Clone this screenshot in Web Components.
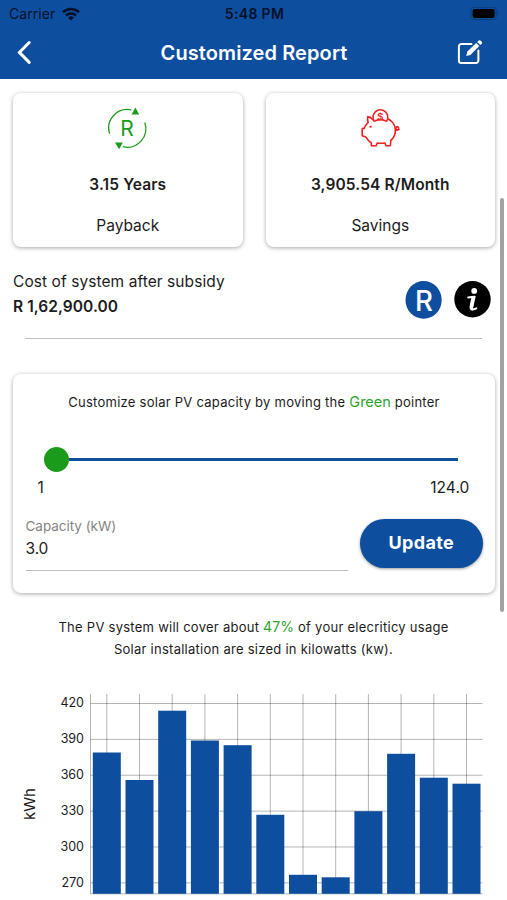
<!DOCTYPE html>
<html lang="en">
<head>
<meta charset="utf-8">
<title>Customized Report</title>
<style>
html,body{margin:0;height:100%;overflow:hidden;background:#fff}
body{font-family:Inter,"Liberation Sans",sans-serif;color:#1c1c1c}
</style>
</head>
<body>
<report-app></report-app>
<script>
const define = (name, html, setup) => customElements.define(name, class extends HTMLElement {
  connectedCallback() {
    if (this.shadowRoot) return;
    this.attachShadow({mode: 'open'}).innerHTML = html;
    if (setup) setup(this.shadowRoot, this);
  }
});

define('status-bar', `
<style>
:host{display:grid;grid-template-columns:1fr auto 1fr;align-items:center;height:27px;padding:0 7px 0 9px;font-size:14px;color:#06122b;box-sizing:border-box}
.l{display:flex;align-items:center;gap:7px;letter-spacing:.05px}
.c{font-weight:580;letter-spacing:.36px}
.r{display:flex;justify-content:flex-end}
svg{display:block}
</style>
<div class="l"><span>Carrier</span><svg width="18" height="14" viewBox="0 0 18 14"><g fill="none" stroke="#050f25" stroke-width="2.6"><path d="M1 5.2a11.6 11.6 0 0 1 16 0"/><path d="M4 8.5a7.3 7.3 0 0 1 10 0"/></g><path d="M9 13.6 6.1 10.7a4.2 4.2 0 0 1 5.8 0z" fill="#050f25"/></svg></div>
<div class="c">5:48 PM</div>
<div class="r"><svg width="30" height="14" viewBox="0 0 30 14"><rect x=".8" y=".3" width="25.4" height="12.2" rx="3.6" fill="none" stroke="#0b3c7d" stroke-width="1.1"/><rect x="2.6" y="2" width="22" height="9" rx="2" fill="#000"/><path d="M27.6 4.3a2.6 2.6 0 0 1 0 4.4z" fill="#0b3c7d"/></svg></div>`);

define('nav-bar', `
<style>
:host{display:grid;grid-template-columns:1fr auto 1fr;align-items:center;height:51px;padding:0 24px 0 16px;color:#fff;box-sizing:border-box}
h1{margin:0;font-size:20px;line-height:24px;font-weight:580;letter-spacing:.1px;padding-left:9px}
svg{display:block}.r{display:flex;justify-content:flex-end}
</style>
<svg width="18" height="26" viewBox="0 0 18 26"><path d="M13.2 2.5 3.4 12.4l9.8 10" fill="none" stroke="#fff" stroke-width="3" stroke-linecap="round" stroke-linejoin="miter"/></svg>
<h1>Customized Report</h1>
<div class="r"><svg width="26" height="26" viewBox="0 0 26 26"><g transform="translate(0 -.7)"><path d="M14.5 4.6H4.4a2.5 2.5 0 0 0-2.5 2.5v14.2a2.5 2.5 0 0 0 2.5 2.5h14.5a2.5 2.5 0 0 0 2.5-2.5V11.2" fill="none" stroke="#fff" stroke-width="2" stroke-linecap="round"/><path d="M9.2 16.7 10.4 12.2 19.2 3.6 22.3 6.7 13.4 15.6z" fill="#fff"/><path d="m20.2 2.6 1-1a2 2 0 0 1 2.8 0l.4.4a2 2 0 0 1 0 2.8l-1 1z" fill="#fff"/></g></svg></div>`);

define('ui-card', `
<style>
:host{display:block;box-sizing:border-box;background:#fff;border-radius:8px;box-shadow:0 1px 4px rgba(0,0,0,.34)}
</style><slot></slot>`);

define('stat-card', `
<style>
:host{display:block;flex:1}
ui-card{height:154px;display:flex;flex-direction:column;align-items:center;padding-top:14px;font-size:15.5px;line-height:20px}
.i{height:44px;margin-bottom:24px}
.v{font-weight:580;letter-spacing:.12px;margin-bottom:21px}
</style>
<ui-card><div class="i"><slot name="icon"></slot></div><div class="v"><slot name="value"></slot></div><div><slot></slot></div></ui-card>`);

define('payback-icon', `
<style>:host{display:block}svg{display:block}</style>
<svg width="44" height="44" viewBox="0 0 44 44"><g transform="translate(-.6 -.3)"><g fill="none" stroke="#1a9c1a" stroke-width="1.3"><path d="M4.2 27A18.6 18.6 0 0 1 26 3.2"/><path d="M39.4 15.8A18.6 18.6 0 0 1 17.5 40"/></g><path d="M30 .9 33.8 7.8H26.2zM13.7 42.5 9.6 35.7H17.4z" fill="#1a9c1a"/><text x="21.5" y="29" text-anchor="middle" font-family="Inter,sans-serif" font-size="21" fill="#1a9c1a">R</text></g></svg>`);

define('piggy-icon', `
<style>:host{display:block}svg{display:block}</style>
<svg width="44" height="44" viewBox="0 0 44 44"><g fill="none" stroke="#f0221f" stroke-width="1.6" stroke-linejoin="round" stroke-linecap="round"><path d="M15 12.8c-1.9-2.2-3.6-3-5.2-3.2-.5 2.3-.3 4 .3 6-2.2 1.9-3.2 3.6-3.7 5.5l-2.2.5v7.2l3.6 1.1c1.7 3 3.5 4.8 5.5 6.1v2.7h4.9l1-2.7c2.8.4 5.6.4 7.8 0l1 2.7h4.4l.4-5.3c3.4-2.8 4.6-6 4.6-9.8 0-3.4-1.2-6.6-3.7-9.1-.9-.9-2-1.7-3.2-2.3"/><path d="M16.2 14.2a7.4 7.4 0 1 1 12.4 0"/><path d="M17.5 13.8c3-1.4 6.7-1.4 9.8 0" /><path d="M37.5 23.2c2.5.5 3.6-.8 3-2.5-.6-1.5-3-1-2.7.8.2 1.2 1.8 1.8 3.2 1"/><path d="M12.3 19.7h.5" stroke-width="1.9"/></g><text x="22.4" y="13.4" text-anchor="middle" font-family="Inter,sans-serif" font-weight="600" font-size="9.5" fill="#f0221f">$</text></svg>`);

define('cost-row', `
<style>
:host{display:block;padding:0 16px 0 13px}
.row{display:flex;justify-content:space-between;height:69px;font-size:15.5px;line-height:25px;letter-spacing:.07px}
b{font-weight:580;display:block;letter-spacing:.06px}
.icons{display:flex;gap:12px;padding-top:12px}
svg{display:block}
hr{border:0;height:1px;background:#bdbdbd;margin:0 9px 0 12px}
</style>
<div class="row"><div>Cost of system after subsidy<b>R 1,62,900.00</b></div>
<div class="icons"><svg width="37" height="39" viewBox="0 0 37 39"><ellipse cx="18.6" cy="18.9" rx="18.1" ry="18.9" fill="#0e4e9f"/><text x="19" y="30" text-anchor="middle" font-family="Inter,sans-serif" font-weight="500" font-size="28.5" textLength="18" lengthAdjust="spacingAndGlyphs" fill="#fff">R</text></svg>
<svg width="37" height="38" viewBox="0 0 37 38"><circle cx="18.5" cy="18.2" r="18.2" fill="#000"/><circle cx="20.2" cy="9.9" r="2.9" fill="#fff"/><path d="M14.2 16.4c2.5-.4 4-.6 6.4-.6M22.3 27.3c-1.8 1-3.4 1.1-4.2.3" fill="none" stroke="#fff" stroke-width="2" stroke-linecap="round"/><path d="M19.6 15.4 17.5 25.6q-.3 2.2 1.6 2.2" fill="none" stroke="#fff" stroke-width="3.9"/></svg></div></div>
<hr>`);

define('range-slider', `
<style>
:host{display:block}
.t{display:flex;align-items:center;height:25px;margin:0 37px 0 31px}
i{width:25px;height:25px;border-radius:50%;background:#1a9c1a}
u{flex:1;height:2.6px;background:#0e4e9f}
.n{display:flex;justify-content:space-between;margin:6px 25.5px 0 24.5px;font-size:15.5px;line-height:20px;letter-spacing:.1px}
</style>
<div class="t"><i></i><u></u></div><div class="n"><span>1</span><span>124.0</span></div>`);

define('capacity-form', `
<style>
:host{display:flex;justify-content:space-between;padding:0 12.5px;align-items:flex-start}
.f{width:322.5px;border-bottom:1px solid #bdbdbd;height:52px;box-sizing:border-box}
label{display:block;font-size:13.5px;line-height:14px;color:#858585;letter-spacing:-.03px}
span{display:block;font-size:15.5px;line-height:20px;margin-top:6px;letter-spacing:-.1px}
button{width:122.5px;height:49px;border:0;padding:0;border-radius:25px;background:#0e4e9f;color:#fff;font:650 18px/24px Inter,sans-serif;letter-spacing:.35px;box-shadow:0 1px 3px rgba(0,0,0,.4)}
</style>
<div class="f"><label>Capacity (kW)</label><span>3.0</span></div><button>Update</button>`);

define('customize-card', `
<style>
:host{display:block}
ui-card{height:219px;padding-top:18px}
p{margin:0 0 35px;text-align:center;font-size:13px;line-height:20px;letter-spacing:.26px;white-space:nowrap}
em{font-style:normal;font-size:14.5px;letter-spacing:0;color:#2ba52b}
capacity-form{margin-top:20.5px}
</style>
<ui-card><p>Customize solar PV capacity by moving the <em>Green</em> pointer</p><range-slider></range-slider><capacity-form></capacity-form></ui-card>`);

define('usage-note', `
<style>
:host{display:block;text-align:center;font-size:13px;line-height:22px;letter-spacing:.26px;white-space:nowrap}
em{font-style:normal;font-size:14px;letter-spacing:.1px;color:#2ba52b}
p{margin:0}
</style>
<p>The PV system will cover about <em>47%</em> of your elecriticy usage</p><p>Solar installation are sized in kilowatts (kw).</p>`);

define('usage-chart', `
<style>:host{display:block}svg{display:block}text{font-family:Inter,"Liberation Sans",sans-serif;fill:#1c1c1c}</style>
<svg width="507" height="216" viewBox="0 684 507 216"></svg>`, root => {
  const tops = [752.5, 780, 710.7, 740.5, 745.2, 814.8, 874.8, 877.3, 811.2, 753.8, 777.7, 783.7];
  const step = 32.7, first = 106.8, base = 893.8;
  let s = '<g stroke="#000" stroke-opacity=".29" stroke-width="1">';
  for (let i = 0; i < 6; i++) s += `<path d="M90.5 ${703.5 + i * 35.87}H482.5"/>`;
  tops.forEach((_, i) => s += `<path d="M${first + i * step} 694V${base}"/>`);
  s += `<path d="M90.5 694V${base}H482.5" fill="none"/></g>`;
  tops.forEach((t, i) => s += `<rect x="${first + i * step - 14}" y="${t}" width="28" height="${base - t}" fill="#0e4e9f"/>`);
  [420, 390, 360, 330, 300, 270].forEach((n, i) => s += `<text x="84" y="${707.3 + i * 35.87}" font-size="12.5" text-anchor="end">${n}</text>`);
  s += '<text transform="translate(35 804) rotate(-90)" text-anchor="middle" font-size="15">kWh</text>';
  root.querySelector('svg').innerHTML = s;
});

define('report-app', `
<style>
:host{display:block;position:relative;width:507px;height:900px;overflow:hidden;background:#fff}
header{height:79px;background:#0e4e9f}
.stats{display:flex;gap:23px;padding:14px 12px 0 13px}
cost-row{margin-top:22px}
customize-card{margin:35px 12px 0 13px}
usage-note{margin-top:22.5px}
usage-chart{margin-top:24.5px}
.bar{position:absolute;right:3px;top:198px;width:4px;height:414px;border-radius:2px;background:#a2a2a2}
</style>
<header><status-bar></status-bar><nav-bar></nav-bar></header>
<div class="stats">
<stat-card><payback-icon slot="icon"></payback-icon><span slot="value">3.15 Years</span>Payback</stat-card>
<stat-card><piggy-icon slot="icon"></piggy-icon><span slot="value">3,905.54 R/Month</span>Savings</stat-card>
</div>
<cost-row></cost-row>
<customize-card></customize-card>
<usage-note></usage-note>
<usage-chart></usage-chart>
<div class="bar"></div>`);
</script>
</body>
</html>
